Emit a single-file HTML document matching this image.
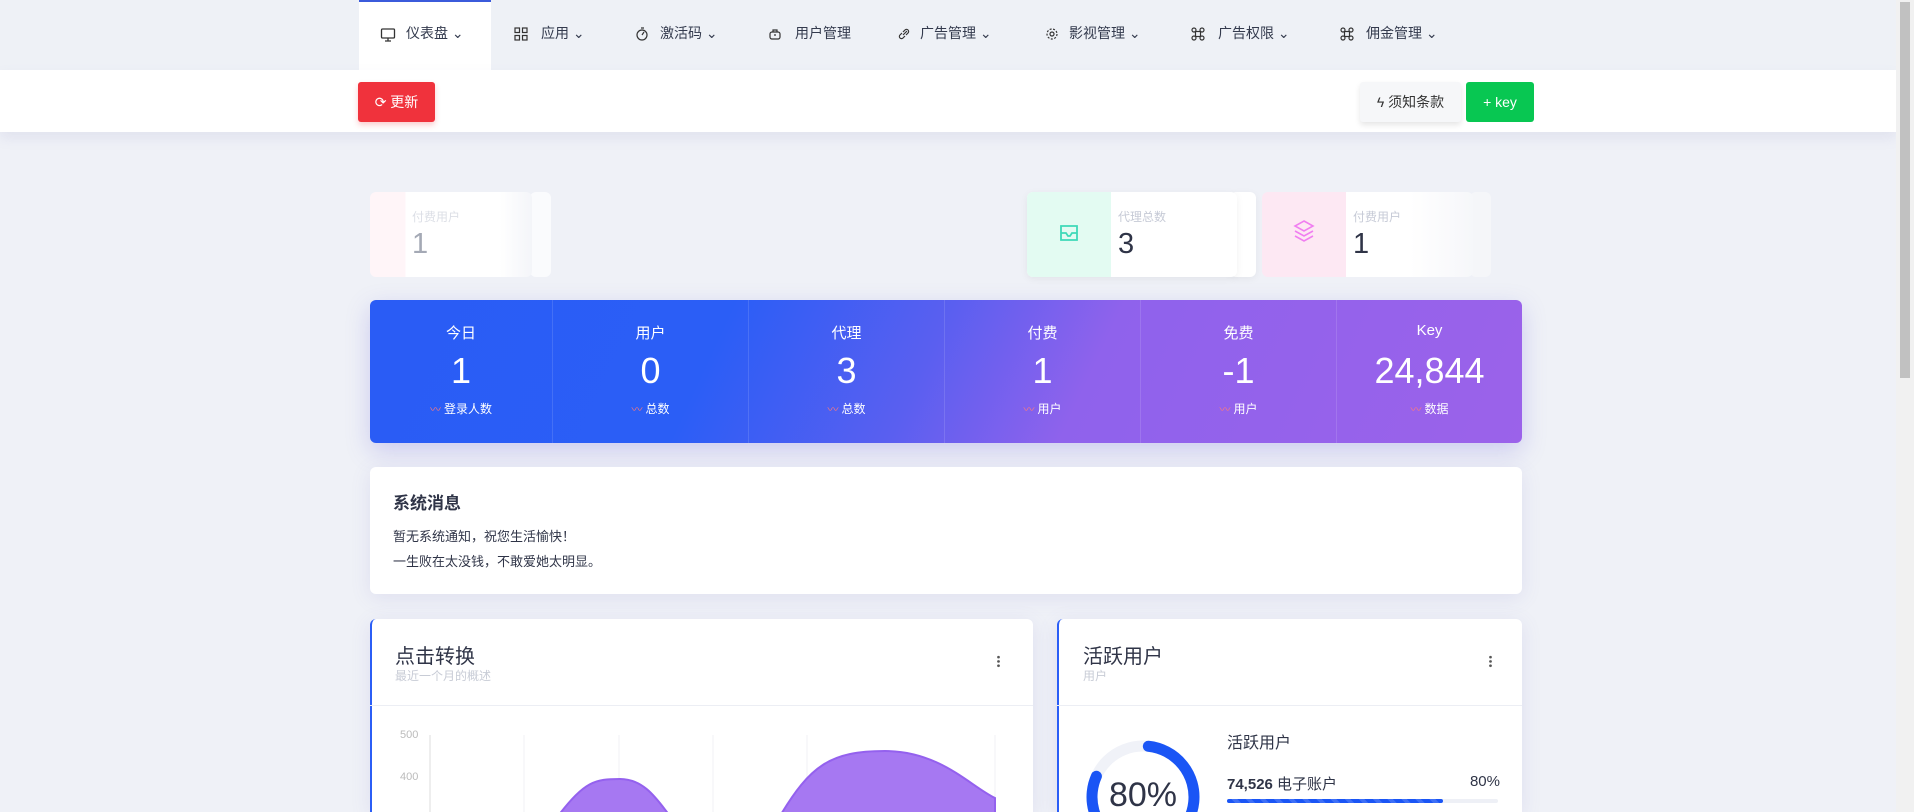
<!DOCTYPE html>
<html><head><meta charset="utf-8"><style>
*{margin:0;padding:0;box-sizing:border-box}
html,body{width:1914px;height:812px;overflow:hidden}
body{background:#eff1f7;font-family:"Liberation Sans","Noto Sans CJK SC",sans-serif;color:#2f3447;position:relative}
.abs{position:absolute}
.nav{left:0;top:0;width:1896px;height:70px;background:#eef1f6}
.navi{position:absolute;top:0;height:70px;line-height:66px;font-size:14px;color:#333a4d;white-space:nowrap}
.navi svg{position:absolute;top:27px}
.bar{left:0;top:70px;width:1896px;height:62px;background:#fff;box-shadow:0 6px 12px rgba(120,120,180,.12)}
.btn{position:absolute;top:82px;height:40px;line-height:40px;font-size:14px;border-radius:3px;text-align:center}
.card{position:absolute;background:#fff;border-radius:6px;box-shadow:0 4px 20px rgba(110,100,190,.12)}
.col{position:absolute;top:0;height:143px;text-align:center;color:#fff;border-right:1px solid rgba(255,255,255,.12)}
.col .l{position:absolute;top:22px;width:100%;font-size:15px}
.col .n{position:absolute;top:50px;width:100%;font-size:36px}
.col .s{position:absolute;top:100px;width:100%;font-size:12px}
.col .s i{color:#ff7a7a;font-style:normal;font-size:11px;margin-right:3px}
.sc{position:absolute;top:192px;height:85px;border-radius:6px;overflow:hidden}
.sc .t{position:absolute;top:16px;font-size:12px;color:#c6cad6}
.sc .v{position:absolute;top:36px;font-size:29px;color:#2f3447}
</style></head><body>
<div class="abs nav"></div>
<div class="abs" style="left:359px;top:0;width:132px;height:70px;background:#fff;border-top:2px solid #3b5bdb"></div>
<div class="navi" style="left:380px"><svg width="16" height="16" viewBox="0 0 16 16" fill="none" stroke="#333" stroke-width="1.3"><rect x="1.5" y="2" width="13" height="9" rx="1"/><path d="M5 14h6M8 11v3"/></svg><span style="margin-left:26px">仪表盘 ⌄</span></div>
<div class="navi" style="left:514px"><svg width="14" height="14" viewBox="0 0 14 14" fill="none" stroke="#333" stroke-width="1.2"><rect x="1" y="1" width="4.5" height="4.5"/><rect x="8.5" y="1" width="4.5" height="4.5"/><rect x="1" y="8.5" width="4.5" height="4.5"/><rect x="8.5" y="8.5" width="4.5" height="4.5"/></svg><span style="margin-left:27px">应用 ⌄</span></div>
<div class="navi" style="left:635px"><svg width="14" height="14" viewBox="0 0 14 14" fill="none" stroke="#333" stroke-width="1.2"><circle cx="7" cy="8" r="5"/><path d="M7 8l2-3M6 1h3"/></svg><span style="margin-left:25px">激活码 ⌄</span></div>
<div class="navi" style="left:768px"><svg width="14" height="14" viewBox="0 0 14 14" fill="none" stroke="#333" stroke-width="1.2"><rect x="2" y="5" width="10" height="7" rx="2"/><path d="M5 5V3h4v2M6 8h2"/></svg><span style="margin-left:27px">用户管理</span></div>
<div class="navi" style="left:897px"><svg width="14" height="14" viewBox="0 0 14 14" fill="none" stroke="#333" stroke-width="1.2"><path d="M6 8l4-4M5 6L3 8a2 2 0 003 3l2-2M9 8l2-2a2 2 0 00-3-3L6 5"/></svg><span style="margin-left:23px">广告管理 ⌄</span></div>
<div class="navi" style="left:1045px"><svg width="14" height="14" viewBox="0 0 14 14" fill="none" stroke="#333" stroke-width="1.2"><circle cx="7" cy="7" r="2"/><circle cx="7" cy="7" r="5" stroke-dasharray="2 1.5"/></svg><span style="margin-left:24px">影视管理 ⌄</span></div>
<div class="navi" style="left:1191px"><svg width="14" height="14" viewBox="0 0 14 14" fill="none" stroke="#333" stroke-width="1.2"><rect x="4.5" y="4.5" width="5" height="5"/><circle cx="3" cy="3" r="2"/><circle cx="11" cy="3" r="2"/><circle cx="3" cy="11" r="2"/><circle cx="11" cy="11" r="2"/></svg><span style="margin-left:27px">广告权限 ⌄</span></div>
<div class="navi" style="left:1340px"><svg width="14" height="14" viewBox="0 0 14 14" fill="none" stroke="#333" stroke-width="1.2"><rect x="4.5" y="4.5" width="5" height="5"/><circle cx="3" cy="3" r="2"/><circle cx="11" cy="3" r="2"/><circle cx="3" cy="11" r="2"/><circle cx="11" cy="11" r="2"/></svg><span style="margin-left:26px">佣金管理 ⌄</span></div>

<div class="abs bar"></div>
<div class="btn" style="left:358px;width:77px;background:#f0323c;color:#fff;box-shadow:0 3px 6px rgba(240,50,60,.25)">⟳ 更新</div>
<div class="btn" style="left:1360px;width:101px;background:#f6f7f9;color:#333;box-shadow:0 3px 6px rgba(0,0,0,.1)">ϟ 须知条款</div>
<div class="btn" style="left:1466px;width:68px;background:#08c752;color:#fff">+ key</div>

<div class="abs" style="left:1896px;top:0;width:18px;height:812px;background:#f1f1f1"></div>
<div class="abs" style="left:1900px;top:2px;width:10px;height:376px;background:#c1c1c1"></div>

<div class="sc" style="left:530px;width:21px;background:#fff;opacity:.7"></div>
<div class="sc" style="left:370px;width:162px;background:linear-gradient(90deg,#fff5f8 0,#fff5f8 35px,#fff 36px,#fff 80%,#f4f5f9)"><div class="t" style="left:42px;color:#dcdfe6">付费用户</div><div class="v" style="left:42px;color:#a4a9b5">1</div></div>
<div class="sc" style="left:1230px;width:26px;background:#fff;box-shadow:0 2px 8px rgba(0,0,0,.05)"></div>
<div class="sc" style="left:1027px;width:210px;background:#fff;box-shadow:0 2px 8px rgba(0,0,0,.06)"><div class="abs" style="left:0;top:0;width:84px;height:85px;background:#e3fbf2"></div>
<svg class="abs" style="left:31px;top:30px" width="22" height="22" viewBox="0 0 22 22" fill="none" stroke="#3ed9b8" stroke-width="1.8"><path d="M3 4h16v14H3zM3 11h5l2 3h2l2-3h5"/></svg>
<div class="t" style="left:91px">代理总数</div><div class="v" style="left:91px">3</div></div>
<div class="sc" style="left:1470px;width:21px;background:#f5f6f9"></div>
<div class="sc" style="left:1262px;width:211px;background:linear-gradient(90deg,#fde8f3 0,#fde8f3 84px,#fff 84px,#fff 70%,#f6f7fa)">
<svg class="abs" style="left:30px;top:27px" width="24" height="26" viewBox="0 0 24 26" fill="none" stroke="#f07ef0" stroke-width="1.6"><path d="M12 2l9 5-9 5-9-5zM3 12l9 5 9-5M3 17l9 5 9-5"/></svg>
<div class="t" style="left:91px">付费用户</div><div class="v" style="left:91px">1</div></div>

<div class="abs" style="left:370px;top:300px;width:1152px;height:143px;border-radius:6px;overflow:hidden;background:linear-gradient(115deg,#2a5cf5 0%,#2b5ef6 30%,#5a5ff0 48%,#8f62ec 62%,#9b62ea 100%);box-shadow:0 8px 24px rgba(100,90,220,.25)">
<div class="col" style="left:0;width:183px"><div class="l">今日</div><div class="n">1</div><div class="s"><i>〰</i>登录人数</div></div>
<div class="col" style="left:183px;width:196px"><div class="l">用户</div><div class="n">0</div><div class="s"><i>〰</i>总数</div></div>
<div class="col" style="left:379px;width:196px"><div class="l">代理</div><div class="n">3</div><div class="s"><i>〰</i>总数</div></div>
<div class="col" style="left:575px;width:196px"><div class="l">付费</div><div class="n">1</div><div class="s"><i>〰</i>用户</div></div>
<div class="col" style="left:771px;width:196px"><div class="l">免费</div><div class="n">-1</div><div class="s"><i>〰</i>用户</div></div>
<div class="col" style="left:967px;width:185px;border:0"><div class="l">Key</div><div class="n">24,844</div><div class="s"><i>〰</i>数据</div></div>
</div>

<div class="card" style="left:370px;top:467px;width:1152px;height:127px">
<div class="abs" style="left:23px;top:22px;font-size:17px;font-weight:bold">系统消息</div>
<div class="abs" style="left:23px;top:57px;font-size:13px;line-height:25px">暂无系统通知，祝您生活愉快！<br>一生败在太没钱，不敢爱她太明显。</div>
</div>

<div class="card" style="left:370px;top:619px;width:663px;height:193px;border-left:2px solid #2b5ef6;border-radius:6px 6px 0 0">
<div class="abs" style="left:23px;top:21px;font-size:20px">点击转换</div>
<div class="abs" style="left:23px;top:48px;font-size:12px;color:#c8ccd6">最近一个月的概述</div>
<div class="abs" style="left:625px;top:36px;width:3px;height:13px;background:radial-gradient(circle,#555 1.2px,transparent 1.5px) 0 0/3px 4.3px"></div>
<div class="abs" style="left:-2px;top:86px;width:663px;height:1px;background:#eceef4"></div>
<svg class="abs" style="left:-2px;top:87px" width="663" height="106">
<g font-size="11" fill="#bbb" font-family="Liberation Sans"><text x="30" y="32">500</text><text x="30" y="74">400</text></g>
<g stroke="#f0f1f5"><path d="M60 29v100M154 29v100M249 29v100M343 29v100M437 29v100M625 29v100"/></g>
<path d="M60 29v100" stroke="#ddd"/>
<path d="M188 110 C215 75 225 73 250 73 C275 73 288 95 300 110Z M410 110 C440 60 460 45 515 45 C570 45 600 80 625 92 V110Z" fill="#a678f2" stroke="#9461ee" stroke-width="2"/>
</svg>
</div>

<div class="card" style="left:1057px;top:619px;width:465px;height:193px;border-left:2px solid #2b5ef6;border-radius:6px 6px 0 0">
<div class="abs" style="left:24px;top:21px;font-size:20px">活跃用户</div>
<div class="abs" style="left:24px;top:48px;font-size:12px;color:#c8ccd6">用户</div>
<div class="abs" style="left:430px;top:36px;width:3px;height:13px;background:radial-gradient(circle,#555 1.2px,transparent 1.5px) 0 0/3px 4.3px"></div>
<div class="abs" style="left:-2px;top:86px;width:465px;height:1px;background:#eceef4"></div>
<svg class="abs" style="left:26px;top:120px" width="116" height="116" viewBox="0 0 116 116">
<circle cx="58" cy="58" r="51" fill="none" stroke="#f0f2f8" stroke-width="11"/>
<circle cx="58" cy="58" r="51" fill="none" stroke="#1a55f5" stroke-width="11" stroke-linecap="round" stroke-dasharray="256 400" transform="rotate(-84 58 58)"/>
</svg>
<div class="abs" style="left:26px;top:157px;width:116px;text-align:center;font-size:34px;color:#2f3447">80%</div>
<div class="abs" style="left:168px;top:110px;font-size:16px">活跃用户</div>
<div class="abs" style="left:168px;top:154px;font-size:15px"><b>74,526</b> 电子账户</div>
<div class="abs" style="left:400px;top:154px;font-size:15px;width:41px;text-align:right">80%</div>
<div class="abs" style="left:168px;top:180px;width:271px;height:4px;border-radius:2px;background:#eef0f6"><div style="width:216px;height:4px;border-radius:2px;background:repeating-linear-gradient(45deg,#1a55f5 0 6px,#3d6ff7 6px 10px)"></div></div>
</div>
</body></html>
